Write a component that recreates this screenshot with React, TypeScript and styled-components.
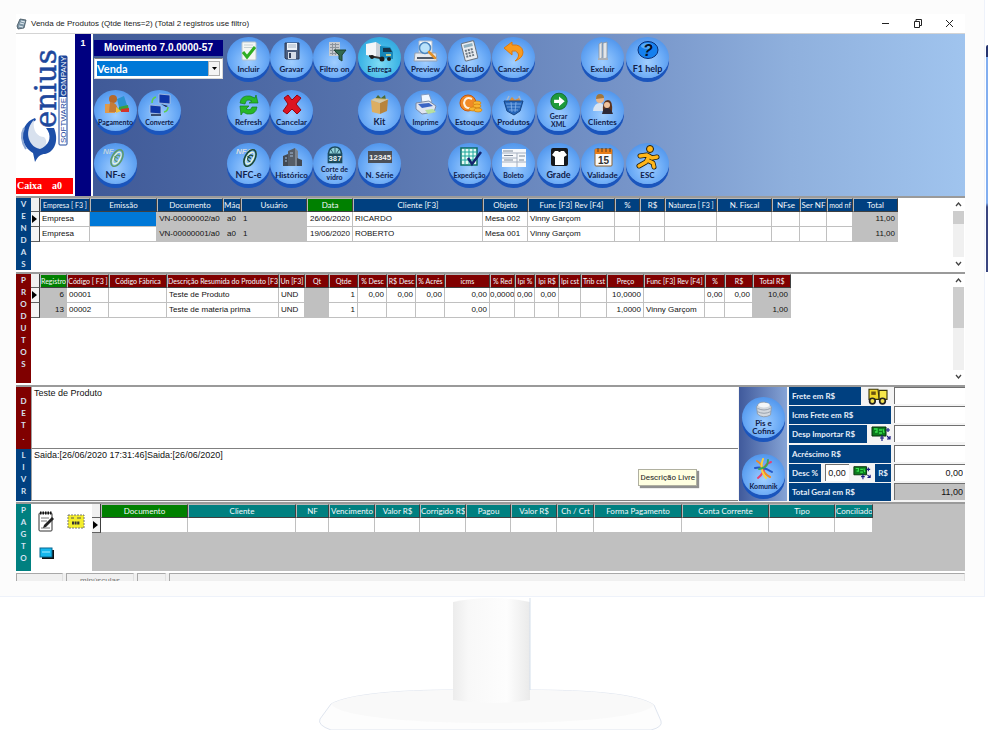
import React from "react";
import styled, { createGlobalStyle, css } from "styled-components";

const SANS = '"Liberation Sans", Arial, sans-serif';
const HAND = '"Comic Sans MS", Lato, sans-serif';
const NAVY = "#004080";
const MAROON = "#800000";
const TEAL = "#008080";
const GREEN = "#008000";
const SILVER = "#c0c0c0";

const GlobalStyle = createGlobalStyle`
  *, *::before, *::after { box-sizing: border-box; }
  body { margin: 0; background: #fff; font-family: ${SANS}; overflow: hidden; }
  button, input, select, textarea { font: inherit; margin: 0; padding: 0; border: 0; border-radius: 0; outline: 0; }
`;

/* ---------- page and monitor ---------- */

const Page = styled.div`
  display: flex;
  align-items: flex-start;
  gap: 1px;
  min-height: 100vh;
  overflow: hidden;
`;

const MonitorColumn = styled.div`
  flex: 1;
  min-width: 0;
`;

const Bezel = styled.div`
  padding: 14px 19px 15px 16px;
  background: #fcfcfc;
  border-right: 1px solid #eef2fa;
  border-bottom: 1px solid #eef2fa;
`;

const EdgeCard = styled.div`
  flex: none;
  width: 2px;
  height: 227px;
  margin-top: 45px;
  border-top-left-radius: 2px;
  background: linear-gradient(#26346f 0 12px, #82aef0 12px 158px, #3a4680 162px 100%);
`;

const StandSvg = styled.svg`
  display: block;
  margin: 0 auto;
`;

/* ---------- application window ---------- */

const AppWindow = styled.main`
  display: flex;
  flex-direction: column;
  background: #fff;
`;

const TitleBar = styled.header`
  display: flex;
  align-items: center;
  height: 20px;
  border-bottom: 1px solid #d4d4d4;
  color: #222;
`;

const TitleText = styled.h1`
  flex: 1;
  margin: 0 0 0 4px;
  font: 400 8px/12px ${SANS};
`;

const CaptionButton = styled.button`
  display: grid;
  place-items: center;
  width: 32px;
  height: 18px;
  background: none;
`;

const TopArea = styled.section`
  display: flex;
  height: 162px;
`;

const BrandColumn = styled.div`
  display: flex;
  flex-direction: column;
  width: 59px;
  padding-right: 2px;
`;

const CashTag = styled.div`
  display: flex;
  gap: 10px;
  height: 16px;
  margin-bottom: 2px;
  padding-left: 1px;
  background: #ff0000;
  color: #fff;
  font: 700 10px/16px "Liberation Serif", serif;
`;

const NumberStrip = styled.div`
  width: 16px;
  margin-right: 2px;
  padding-top: 3px;
  background: #000080;
  color: #fff;
  text-align: center;
  font: 700 9px/12px ${SANS};
`;

const Toolbar = styled.nav`
  flex: 1;
  display: grid;
  grid-template-columns: 44px 44px 45px 43px 43px 45px 46px 44px 44px 45px 44px 45px 43px;
  grid-template-rows: 53px 53px 53px;
  align-content: start;
  padding: 3px 0 0 1px;
  background: linear-gradient(90deg, #405a98 0%, #5572ac 30%, #7795c9 62%, #8fb0dd 80%, #a0c4ee 100%);
`;

const MovementBlock = styled.div`
  grid-column: 1 / span 3;
  display: flex;
  flex-direction: column;
  gap: 2px;
  width: 129px;
  padding-top: 3px;
`;

const MovementTitle = styled.div`
  height: 16px;
  background: #000080;
  color: #fff;
  text-align: center;
  white-space: nowrap;
  font: 700 10px/16px ${SANS};
`;

const ComboBox = styled.div`
  display: grid;
  grid-template-columns: 1fr 12px;
  height: 21px;
  padding: 2px;
  background: #fff;
  border: 1px solid #d8d8d8;
  border-top-color: #808080;
`;

const ComboSelect = styled.select`
  appearance: none;
  background: #0078d7;
  color: #fff;
  font: 700 11px/15px ${HAND};
`;

const ComboArrow = styled.span`
  display: grid;
  place-items: center;
  background: #f4f4f4;
  border: 1px solid #b0b0b0;
`;

const RoundButton = styled.button<{ $col?: number; $row?: number; $cyan?: boolean }>`
  ${({ $col, $row }) => $col && css`grid-column: ${$col}; grid-row: ${$row};`}
  display: flex;
  flex-direction: column;
  align-items: center;
  width: 43px;
  height: 41px;
  padding-top: 4px;
  border-radius: 50%;
  box-shadow: 0 4px 0 #1a55bd;
  background: ${({ $cyan }) =>
    $cyan
      ? "radial-gradient(circle at 50% 65%, #7fdcf4 0%, #3fb6e6 55%, #2a9ad8 100%)"
      : "radial-gradient(circle at 50% 62%, #a0ceff 0%, #6aaaf6 50%, #3c84e2 100%)"};
  color: #10204a;
`;

const IconSvg = styled.svg<{ $small?: boolean }>`
  flex: none;
  display: block;
  width: 26px;
  height: ${({ $small }) => ($small ? 18 : 22)}px;
  overflow: visible;
`;

const RoundLabel = styled.span<{ $size: number; $two?: boolean }>`
  white-space: pre;
  text-align: center;
  font: 700 ${({ $size }) => $size}px/${({ $two }) => ($two ? 8 : 12)}px ${HAND};
`;

/* ---------- data panels ---------- */

const Panel = styled.section<{ $height: number }>`
  display: flex;
  min-height: ${({ $height }) => $height}px;
  padding: 0 0 2px;
  border-top: 2px solid #9a9a9a;
  background: #fff;
`;

const SideLabel = styled.h2<{ $color: string; $pad?: number }>`
  display: flex;
  flex-direction: column;
  flex: none;
  width: 15px;
  margin: 0;
  padding-top: ${({ $pad }) => $pad ?? 0}px;
  background: ${({ $color }) => $color};
  color: #d5e2f2;
  text-align: center;
  font: 700 8px/12px ${HAND};
`;

const GridArea = styled.div<{ $fill?: string }>`
  flex: 1;
  min-width: 0;
  overflow: hidden;
  background: ${({ $fill }) => $fill ?? "#fff"};
`;

const DataTable = styled.table<{ $width: number }>`
  width: ${({ $width }) => $width}px;
  table-layout: fixed;
  border-collapse: separate;
  border-spacing: 0;
`;

const HeadCell = styled.th<{ $color: string; $size: number }>`
  height: 14px;
  padding: 0;
  overflow: hidden;
  border: 1px solid #404040;
  border-left-color: #b8b8b8;
  border-top-color: #b8b8b8;
  background: ${({ $color }) => $color};
  color: #f4f8fc;
  text-align: center;
  white-space: nowrap;
  font: 400 ${({ $size }) => $size}px/12px Lato, sans-serif;
`;

const Cell = styled.td<{ $fill: string; $align: string; $tight?: boolean }>`
  height: 15px;
  padding: 0 ${({ $tight }) => ($tight ? 0 : 2)}px;
  overflow: hidden;
  border-right: 1px solid ${SILVER};
  border-bottom: 1px solid ${SILVER};
  background: ${({ $fill }) => $fill};
  color: #111;
  text-align: ${({ $align }) => $align};
  white-space: nowrap;
  font: 400 8px/12px ${SANS};
`;

const MarkerCell = styled.td`
  height: 15px;
  padding: 0;
  border-right: 1px solid #404040;
  border-bottom: 1px solid #606060;
  background: #f4f4f4;
`;

const CornerCell = styled.th`
  padding: 0;
  border-right: 1px solid #404040;
  border-bottom: 1px solid #606060;
  background: #f0f0f0;
`;

const Marker = styled.svg`
  display: block;
  margin: 0 auto;
`;

const ScrollColumn = styled.div`
  display: flex;
  flex-direction: column;
  align-items: center;
  flex: none;
  width: 11px;
  margin-right: 1px;
  background: #f0f0f0;
`;

const ScrollThumb = styled.div<{ $size: number }>`
  width: 11px;
  height: ${({ $size }) => $size}px;
  margin-bottom: auto;
  background: #cdcdcd;
`;

const ScrollButton = styled.button`
  display: grid;
  place-items: center;
  width: 11px;
  height: 13px;
  background: #fff;
`;

/* ---------- details ---------- */

const DetailArea = styled.section`
  display: flex;
  height: 117px;
  padding-bottom: 1px;
  border-top: 2px solid #9a9a9a;
  background: #f4f4f4;
`;

const NotesColumn = styled.div`
  flex: 1;
  display: grid;
  grid-template-rows: 62px 1fr;
  position: relative;
`;

const NoteRow = styled.div`
  display: flex;
`;

const NoteText = styled.textarea`
  flex: 1;
  min-width: 0;
  padding: 1px 2px;
  resize: none;
  border-left: 1px solid #a0a0a0;
  border-bottom: 1px solid #808080;
  background: #fff;
  color: #111;
  font: 400 9px/11px ${SANS};
`;

const Tooltip = styled.div`
  position: absolute;
  right: 41px;
  bottom: 15px;
  padding: 0 1px;
  border: 1px solid #b0b0a0;
  background: #ffffe1;
  box-shadow: 2px 2px 1px #909090;
  color: #222;
  font: 400 8px/15px Roboto, sans-serif;
`;

const ExtraActions = styled.div`
  display: flex;
  flex-direction: column;
  gap: 16px;
  width: 48px;
  margin: 0 2px 0 1px;
  padding: 10px 0 0 3px;
  background: linear-gradient(90deg, #405a9c, #86a4d6);
`;

const Totals = styled.form`
  display: grid;
  grid-template-rows: repeat(6, 18px);
  align-content: space-between;
  width: 176px;
`;

const TotalsRow = styled.div`
  display: grid;
  grid-template-columns: 102px 1fr;
  gap: 3px;
`;

const TotalsLead = styled.div`
  display: flex;
  align-items: center;
  gap: 4px;
`;

const FieldLabel = styled.label<{ $fixed?: boolean }>`
  flex: ${({ $fixed }) => ($fixed ? "none" : "1")};
  align-self: stretch;
  padding: 0 3px;
  background: ${NAVY};
  color: #e6eef8;
  white-space: nowrap;
  font: 700 8px/18px ${HAND};
`;

const Field = styled.input<{ $gray?: boolean }>`
  min-width: 0;
  width: 100%;
  height: 17px;
  padding: 0 2px;
  border-top: 1px solid #707070;
  border-left: 1px solid #707070;
  background: ${({ $gray }) => ($gray ? SILVER : "#fff")};
  color: #111;
  text-align: right;
  font: 400 9px/14px ${SANS};
`;

const SmallField = styled(Field)`
  width: 26px;
  text-align: left;
`;

/* ---------- payment and status ---------- */

const PayTools = styled.div`
  display: grid;
  grid-template-columns: 30px 30px;
  grid-template-rows: 34px 30px;
  place-items: center;
  flex: none;
  width: 61px;
`;

const PayButton = styled.button`
  display: grid;
  place-items: center;
  background: none;
`;

const StatusBar = styled.footer`
  display: flex;
  gap: 3px;
  height: 8px;
  overflow: hidden;
  background: #f0f0f0;
`;

const StatusCell = styled.span<{ $width?: number }>`
  ${({ $width }) => ($width ? css`width: ${$width}px;` : css`flex: 1;`)}
  border-top: 1px solid #a8a8a8;
  border-left: 1px solid #a8a8a8;
  border-right: 1px solid #e0e0e0;
  color: #777;
  text-align: center;
  font: 400 8px/14px ${SANS};
`;

/* ---------- icon drawings ---------- */

const bars = (
  <g fill="#8d949c">
    <rect x="7" y="1" width="11" height="14" fill="#c6cbd0" />
    {[3, 6, 9, 12].map((y) => <rect key={y} x="8" y={y} width="9" height="1" />)}
    {[10, 13].map((x) => <rect key={x} x={x} y="2" width="1" height="12" />)}
  </g>
);

const nf = (title: string, gray: string, dark: string) => (
  <>
    <text x="0" y="7" fontSize="8" fontWeight="700" fontStyle="italic" fill={gray} fontFamily="Liberation Sans">{title}</text>
    <g fill="none" transform="rotate(28 14 11)">
      <ellipse cx="14" cy="11" rx="5" ry="9" stroke={dark} strokeWidth="1.6" />
      <ellipse cx="14" cy="11" rx="3" ry="6.5" stroke="#f4fbd0" strokeWidth="1.3" />
      <path d="M16 8q-4-1-4 3t4 3M11 11h4" stroke={dark} strokeWidth="1.2" />
    </g>
  </>
);

const ICONS: Record<string, React.ReactNode> = {
  incluir: (
    <>
      <rect x="6" y="1" width="14" height="18" rx="1" fill="#f3f6f4" stroke="#b8c4cc" />
      <path d="M8 4h9M8 6.500h9" stroke="#c5d0d4" />
      <path d="M7 11l4 5 8-10" fill="none" stroke="#2fae22" strokeWidth="3" />
    </>
  ),
  gravar: (
    <>
      <path d="M6 2h14v16H7l-1-1z" fill="#4b5f80" stroke="#2c3a55" />
      <rect x="8" y="2" width="10" height="7" fill="#eef3f8" />
      <path d="M9 4h8M9 6h8" stroke="#a9b6c5" />
      <rect x="9" y="11" width="8" height="7" fill="#d6dee8" />
      <rect x="10" y="12" width="2" height="5" fill="#33425f" />
    </>
  ),
  filtro: (
    <>
      {bars}
      <path d="M12 9h12l-4 5v6l-3-2v-4z" fill="#32694f" stroke="#1d4030" />
    </>
  ),
  entrega: (
    <>
      <path d="M-1 3l10-2v15l-10-2z" fill="#f4f6f8" />
      <path d="M9 1l5 3v12H9z" fill="#c8d0d8" />
      <path d="M13 5l10 1 3 5v7l-13-1z" fill="#1787b8" />
      <path d="M16 7h7l2 4h-9z" fill="#15354b" />
      <path d="M2 14l11 2v2L2 16z" fill="#333" />
      <g fill="#1c1c1c"><circle cx="5" cy="16" r="2" /><circle cx="15" cy="18" r="2.500" /><circle cx="22" cy="18" r="2" /></g>
      <path d="M19 14h5" stroke="#f2e089" strokeWidth="1.500" />
    </>
  ),
  preview: (
    <>
      <path d="M6 0h13v12H6z" fill="#fff" stroke="#b0bccb" />
      <path d="M2 12h21l1 8H1z" fill="#e6eaef" stroke="#93a0b2" />
      <path d="M4 16h17v2H4z" fill="#4f5a6a" />
      <circle cx="12" cy="7" r="5.500" fill="#b9e2fb" stroke="#4d87c0" strokeWidth="1.500" />
      <path d="M16 11l6 6" stroke="#e0912c" strokeWidth="2.500" strokeLinecap="round" />
    </>
  ),
  calculo: (
    <g transform="rotate(-14 12 10)">
      <rect x="6" y="1" width="13" height="18" rx="1" fill="#e9edf1" stroke="#6a7480" />
      <rect x="8" y="3" width="9" height="3" fill="#8fb0c0" />
      {[8, 11, 14].map((y) => [8, 11, 14].map((x) => <rect key={`${x}${y}`} x={x} y={y} width="2" height="2" fill="#6c7883" />))}
    </g>
  ),
  voltar: (
    <path d="M3 7l8-6v3q10-1 11 7 0 6-8 9 5-4 3-8-2-3-6-2v4z" fill="#f99a1c" stroke="#e07808" />
  ),
  excluir: (
    <>
      <path d="M9 3l3-2v16l-3 1zM13 2l4-1v16l-4 1z" fill="#e3e6ea" stroke="#8a929c" strokeWidth=".8" />
      <path d="M8 17h10v2H8z" fill="#aab0b8" />
    </>
  ),
  help: (
    <>
      <ellipse cx="13" cy="9" rx="10" ry="8.500" fill="#1580ee" stroke="#082f78" />
      <ellipse cx="12" cy="5" rx="6" ry="3" fill="#73baff" opacity=".7" />
      <text x="8" y="15" fontSize="16" fontWeight="700" fontStyle="italic" fill="#071226" fontFamily="Liberation Sans">?</text>
    </>
  ),
  pagamento: (
    <>
      <path d="M14 5l7-3 4 12-8 3z" fill="#2c93cf" />
      <path d="M16 13l9-2 1 6H15z" fill="#3aa23c" />
      <path d="M18 15l8-1v4h-8z" fill="#d4342a" />
      <path d="M2 10h10v9H2z" fill="#e09a4a" />
      <circle cx="10" cy="5" r="4" fill="#b5692c" />
      <path d="M7 8q8 0 8 10H6z" fill="#c57c38" />
      <path d="M13 13l5 4-5 2z" fill="#f0c03a" />
    </>
  ),
  converte: (
    <>
      <g stroke="#b4c4dc" strokeWidth=".8">
        <path d="M12 0l11 1v9l-11-1z" fill="#0f37a8" />
        <path d="M3 11l11 1v8l-11-1z" fill="#0f37a8" />
      </g>
      <path d="M14 10l7 2-2 1z" fill="#1b2440" />
      <path d="M5 9q0-5 4-6M21 13q0 4-4 5" fill="none" stroke="#5fcf4c" strokeWidth="1.500" />
      <path d="M4 21h10" stroke="#1b2440" strokeWidth="1.500" />
    </>
  ),
  refresh: (
    <g fill="#28b828" stroke="#128018" strokeWidth=".7">
      <path d="M4 9q1-8 10-7l5 2 1-3 2 8h-9l3-2q-6-3-7 3z" />
      <path d="M21 13q-1 8-10 7l-4-2-2 3-1-9h9l-3 3q5 2 6-2z" />
    </g>
  ),
  xis: <path d="M5 4l4-3 4 5 5-5 4 3-5 6 5 6-4 4-5-5-5 5-4-3 5-7z" fill="#dc1420" stroke="#96060f" />,
  kit: (
    <>
      <path d="M8 5l3-4 3 3 4-3 1 5z" fill="#4d6b34" />
      <path d="M4 6l9 3v11l-8-2z" fill="#dcae62" />
      <path d="M21 5l-8 4v11l7-3z" fill="#b8843c" />
      <path d="M4 6l4-2 14 1-9 4z" fill="#efcf8e" opacity=".8" />
    </>
  ),
  imprime: (
    <>
      <path d="M8 1l8-1 3 8-10 2z" fill="#eef6ff" stroke="#7f98c0" />
      <path d="M3 9l13-2 7 5-2 6-12 2-6-5z" fill="#dfe5f0" stroke="#7d8aa4" />
      <path d="M5 10l11-1 4 3-11 2z" fill="#3b64c4" />
      <path d="M12 16l8-1 3 3-8 2z" fill="#b8e0a0" />
    </>
  ),
  estoque: (
    <>
      <circle cx="11" cy="9" r="8" fill="#f18a26" stroke="#c4560c" />
      <path d="M15 5q-7-3-8 4 1 6 7 5" fill="none" stroke="#fff2df" strokeWidth="2" />
      <g fill="#f7b531" stroke="#cf7d10" strokeWidth=".7">
        <ellipse cx="20" cy="9" rx="4" ry="2" /><ellipse cx="20" cy="12" rx="4" ry="2" /><ellipse cx="16" cy="15" rx="4" ry="2" /><ellipse cx="21" cy="16" rx="4" ry="2" />
      </g>
    </>
  ),
  produtos: (
    <>
      <path d="M5 8l3-6M20 8l-2-6" stroke="#a6b6cc" strokeWidth="1.500" />
      <path d="M7 8l4-5 3 3 4-2 2 4z" fill="#d98f3e" />
      <path d="M3 7h19l-3 10-6 4-7-4z" fill="#2767ba" stroke="#164483" />
      <path d="M5 10h15M6 13h13M8 16h9M10 8l1 10M15 8l-1 10" stroke="#86b4ec" strokeWidth=".8" />
    </>
  ),
  xml: (
    <>
      <circle cx="13" cy="9" r="10" fill="#1e9a3c" stroke="#0d6423" />
      <path d="M7 7h6V3l7 6-7 6v-4H7z" fill="#fff" />
    </>
  ),
  clientes: (
    <>
      <circle cx="10" cy="5" r="4" fill="#e8b58a" /><path d="M6 5q0-5 4-5t4 4z" fill="#a0763c" />
      <path d="M3 17q1-8 7-8 4 0 5 8z" fill="#d9e4f2" />
      <path d="M13 18q-1-12 5-12 5 0 4 12z" fill="#5d331d" />
      <circle cx="17" cy="11" r="3" fill="#f0c29c" />
      <path d="M12 20q1-6 5-6t6 6z" fill="#2d2a38" />
    </>
  ),
  nfe: nf("NF", "#bcd2e2", "#5d9a6a"),
  nfce: nf("NFC", "#d8dde0", "#1d4a34"),
  historico: (
    <>
      <path d="M9 4l7-3v18H9z" fill="#565d66" />
      <path d="M16 1l3 3v15h-3z" fill="#7c848e" />
      <path d="M4 9l5-2v12H4zM18 11l5 2v6h-5z" fill="#424952" />
      <path d="M11 6h3M11 9h3M6 11h2M6 14h2" stroke="#a4bdd8" />
    </>
  ),
  vidro: (
    <>
      <path d="M4 20V8q1-9 9-9t9 9v12z" fill="#1c4a5c" />
      <path d="M6 8q1-7 7-7t7 7z" fill="#8fd0d8" />
      <path d="M13 1v7M8 3l3 5M18 3l-3 5" stroke="#1c4a5c" />
      <text x="5" y="17" fontSize="9" fontWeight="700" fill="#e8f4f8" fontFamily="Liberation Mono">387</text>
    </>
  ),
  serie: (
    <>
      <rect x="1" y="4" width="24" height="12" fill="#4b5058" />
      <text x="2" y="13" fontSize="8" fontWeight="700" fill="#f2f2f2" fontFamily="Liberation Sans">12345</text>
    </>
  ),
  expedicao: (
    <>
      <rect x="4" y="1" width="16" height="17" fill="#e4fbf4" stroke="#0c6c64" strokeWidth="1.500" />
      <path d="M4 5h16M4 9h16M4 13h16M8 1v17M12 1v17M16 1v17" stroke="#1aa69a" />
      <path d="M11 11l4 6 9-12" fill="none" stroke="#14246e" strokeWidth="2.500" />
    </>
  ),
  boleto: (
    <>
      <rect x="1" y="2" width="24" height="18" fill="#f6f8fb" />
      <path d="M1 6h24M1 11h15M1 15h24M16 6v14" stroke="#a4afc0" />
      <path d="M2 4h10M3 8.500h9M18 9h6M3 13h9M18 13h5" stroke="#5c6a80" strokeWidth=".8" />
    </>
  ),
  grade: (
    <>
      <rect x="5" y="1" width="17" height="18" rx="2" fill="#16181c" />
      <path d="M9 4h3q1.500 2 3 0h3l3 4-3 2v8H9v-8L6 8z" fill="#fff" />
    </>
  ),
  validade: (
    <>
      <rect x="5" y="2" width="17" height="17" rx="1" fill="#fafafa" stroke="#8c6030" />
      <rect x="5" y="2" width="17" height="5" fill="#e87d18" />
      <path d="M8 1v4M12 1v4M16 1v4M20 1v4" stroke="#5a3a18" />
      <text x="8" y="17" fontSize="10" fontWeight="700" fill="#333" fontFamily="Liberation Sans">15</text>
    </>
  ),
  esc: (
    <g stroke="#1c1a10" strokeLinejoin="round">
      <g fill="none" strokeLinecap="round">
        <path d="M5 9l7-1 5 3 5-1M14 9l-3 6-7 4M12 13l6 3 1 4" strokeWidth="5" />
        <path d="M5 9l7-1 5 3 5-1M14 9l-3 6-7 4M12 13l6 3 1 4" stroke="#ffb61a" strokeWidth="3.400" />
      </g>
      <circle cx="15" cy="2" r="3.500" fill="#ffb61a" />
    </g>
  ),
  pis: (
    <>
      <path d="M4 7q4-9 14-4l4 4-1 10q-9 5-16-1z" fill="#d3d8de" stroke="#8c96a2" />
      <path d="M5 9q8 4 16 0M5 13q8 4 16 0" fill="none" stroke="#8c96a2" />
      <ellipse cx="13" cy="5" rx="7" ry="3" fill="#f4f6f8" />
    </>
  ),
  komunik: (
    <g fill="none" strokeWidth="2" strokeLinecap="round">
      <path d="M6 3q5 3 6 8t7 8" stroke="#f08a24" /><path d="M20 4q-6 2-7 7t-6 9" stroke="#e83f72" />
      <path d="M4 10q8-2 17 4" stroke="#2358c8" /><path d="M12 1q-4 10 3 19" stroke="#ffd13a" />
      <path d="M17 2q0 8-9 9" stroke="#3aa852" />
    </g>
  ),
};

interface Action { label: string; icon: string; col: number; row: number; size?: number; cyan?: boolean }

const ACTIONS: Action[] = [
  { label: "Incluir", icon: "incluir", col: 4, row: 1 },
  { label: "Gravar", icon: "gravar", col: 5, row: 1 },
  { label: "Filtro on", icon: "filtro", col: 6, row: 1 },
  { label: "Entrega", icon: "entrega", col: 7, row: 1, size: 7, cyan: true },
  { label: "Preview", icon: "preview", col: 8, row: 1 },
  { label: "Cálculo", icon: "calculo", col: 9, row: 1, size: 9 },
  { label: "Cancelar", icon: "voltar", col: 10, row: 1 },
  { label: "Excluir", icon: "excluir", col: 12, row: 1 },
  { label: "F1 help", icon: "help", col: 13, row: 1, size: 9 },
  { label: "Pagamento", icon: "pagamento", col: 1, row: 2, size: 7 },
  { label: "Converte", icon: "converte", col: 2, row: 2, size: 7 },
  { label: "Refresh", icon: "refresh", col: 4, row: 2 },
  { label: "Cancelar", icon: "xis", col: 5, row: 2 },
  { label: "Kit", icon: "kit", col: 7, row: 2, size: 9 },
  { label: "Imprime", icon: "imprime", col: 8, row: 2, size: 7 },
  { label: "Estoque", icon: "estoque", col: 9, row: 2 },
  { label: "Produtos", icon: "produtos", col: 10, row: 2 },
  { label: "Gerar\nXML", icon: "xml", col: 11, row: 2, size: 7 },
  { label: "Clientes", icon: "clientes", col: 12, row: 2 },
  { label: "NF-e", icon: "nfe", col: 1, row: 3, size: 9 },
  { label: "NFC-e", icon: "nfce", col: 4, row: 3, size: 9 },
  { label: "Histórico", icon: "historico", col: 5, row: 3 },
  { label: "Corte de\nvidro", icon: "vidro", col: 6, row: 3, size: 7 },
  { label: "N. Série", icon: "serie", col: 7, row: 3 },
  { label: "Expedição", icon: "expedicao", col: 9, row: 3, size: 7 },
  { label: "Boleto", icon: "boleto", col: 10, row: 3, size: 7 },
  { label: "Grade", icon: "grade", col: 11, row: 3, size: 9 },
  { label: "Validade", icon: "validade", col: 12, row: 3 },
  { label: "ESC", icon: "esc", col: 13, row: 3 },
];

function ActionButton({ label, icon, col, row, size, cyan }: Omit<Action, "col" | "row"> & { col?: number; row?: number }) {
  const two = label.includes("\n");
  return (
    <RoundButton type="button" $col={col} $row={row} $cyan={cyan}>
      <IconSvg viewBox="0 0 26 22" $small={two} aria-hidden="true">{ICONS[icon]}</IconSvg>
      <RoundLabel $size={size ?? 8} $two={two}>{label}</RoundLabel>
    </RoundButton>
  );
}

/* ---------- tables ---------- */

interface Column { title: string; width: number; color?: string; fill?: string; align?: string; tight?: boolean; size?: number }

const SALES: Column[] = [
  { title: "Empresa [ F3 ]", width: 50, size: 7 },
  { title: "Emissão", width: 67 },
  { title: "Documento", width: 66, fill: SILVER, align: "center" },
  { title: "Máq", width: 18, fill: SILVER, align: "center" },
  { title: "Usuário", width: 66, fill: SILVER },
  { title: "Data", width: 46, color: GREEN, align: "right" },
  { title: "Cliente [F3]", width: 130 },
  { title: "Objeto", width: 45 },
  { title: "Func [F3] Rev [F4]", width: 87 },
  { title: "%", width: 25 },
  { title: "R$", width: 25 },
  { title: "Natureza [ F3 ]", width: 52, size: 7 },
  { title: "N. Fiscal", width: 55 },
  { title: "NFse", width: 28 },
  { title: "Ser NF", width: 27 },
  { title: "mod nf", width: 26, size: 7 },
  { title: "Total", width: 45, fill: SILVER, align: "right" },
];

const SALES_ROWS = [
  ["Empresa", "", "VN-00000002/a0", "a0", "1", "26/06/2020", "RICARDO", "Mesa 002", "Vinny Garçom", "", "", "", "", "", "", "", "11,00"],
  ["Empresa", "", "VN-00000001/a0", "a0", "1", "19/06/2020", "ROBERTO", "Mesa 001", "Vinny Garçom", "", "", "", "", "", "", "", "11,00"],
];

const PRODUCTS: Column[] = [
  { title: "Registro", width: 27, color: GREEN, fill: SILVER, align: "right" },
  { title: "Código [ F3 ]", width: 42 },
  { title: "Código Fábrica", width: 58 },
  { title: "Descrição Resumida do Produto [F3]", width: 112 },
  { title: "Un [F3]", width: 26 },
  { title: "Qt", width: 24, fill: SILVER },
  { title: "Qtde", width: 29, align: "right" },
  { title: "% Desc", width: 29, align: "right" },
  { title: "R$ Desc", width: 29, align: "right" },
  { title: "% Acrés", width: 29, align: "right" },
  { title: "icms", width: 45, align: "right" },
  { title: "% Red", width: 25, align: "right", tight: true },
  { title: "Ipi %", width: 20, align: "right" },
  { title: "Ipi R$", width: 24, align: "right" },
  { title: "Ipi cst", width: 22 },
  { title: "Trib cst", width: 26 },
  { title: "Preço", width: 37, align: "right" },
  { title: "Func [F3] Rev [F4]", width: 61 },
  { title: "%", width: 20, align: "right" },
  { title: "R$", width: 28, align: "right" },
  { title: "Total R$", width: 38, fill: SILVER, align: "right" },
];

const PRODUCT_ROWS = [
  ["6", "00001", "", "Teste de Produto", "UND", "", "1", "0,00", "0,00", "0,00", "0,00", "0,0000", "0,00", "0,00", "", "", "10,0000", "", "0,00", "0,00", "10,00"],
  ["13", "00002", "", "Teste de materia prima", "UND", "", "1", "", "", "", "0,00", "", "", "", "", "", "1,0000", "Vinny Garçom", "", "", "1,00"],
];

const PAYMENTS: Column[] = [
  { title: "Documento", width: 87, color: GREEN },
  { title: "Cliente", width: 108 },
  { title: "NF", width: 33 },
  { title: "Vencimento", width: 46 },
  { title: "Valor R$", width: 45 },
  { title: "Corrigido R$", width: 46 },
  { title: "Pagou", width: 45 },
  { title: "Valor R$", width: 46 },
  { title: "Ch / Crt", width: 37 },
  { title: "Forma Pagamento", width: 88 },
  { title: "Conta Corrente", width: 87 },
  { title: "Tipo", width: 66 },
  { title: "Conciliado", width: 38 },
];

function DataGrid({ columns, rows, color, size, selected }: {
  columns: Column[]; rows: string[][]; color: string; size: number; selected?: number;
}) {
  const total = columns.reduce((sum, c) => sum + c.width, 9);
  return (
    <DataTable $width={total}>
      <colgroup>
        <col width={9} />
        {columns.map((c, i) => <col key={i} width={c.width} />)}
      </colgroup>
      <thead>
        <tr>
          <CornerCell />
          {columns.map((c, i) => <HeadCell key={i} $color={c.color ?? color} $size={c.size ?? size}>{c.title}</HeadCell>)}
        </tr>
      </thead>
      <tbody>
        {rows.map((row, r) => (
          <tr key={r}>
            <MarkerCell>
              {r === 0 && <Marker width="6" height="8" viewBox="0 0 6 8"><path d="M0 0l5 4-5 4z" fill="#000" /></Marker>}
            </MarkerCell>
            {row.map((value, i) => (
              <Cell
                key={i}
                $align={columns[i].align ?? "left"}
                $tight={columns[i].tight}
                $fill={r === 0 && i === selected ? "#0078d7" : columns[i].fill ?? "#fff"}
              >
                {value}
              </Cell>
            ))}
          </tr>
        ))}
      </tbody>
    </DataTable>
  );
}

function Scroll({ thumb }: { thumb: number }) {
  return (
    <ScrollColumn>
      <ScrollButton type="button" aria-label="Subir">
        <svg width="7" height="5" viewBox="0 0 7 5"><path d="M1 4l2.500-3L6 4" fill="none" stroke="#444" strokeWidth="1.300" /></svg>
      </ScrollButton>
      <ScrollThumb $size={thumb} />
      <ScrollButton type="button" aria-label="Descer">
        <svg width="7" height="5" viewBox="0 0 7 5"><path d="M1 1l2.500 3L6 1" fill="none" stroke="#444" strokeWidth="1.300" /></svg>
      </ScrollButton>
    </ScrollColumn>
  );
}

function Side({ text, color, pad }: { text: string; color: string; pad?: number }) {
  return (
    <SideLabel $color={color} $pad={pad}>
      {text.split("").map((letter, i) => <span key={i}>{letter}</span>)}
    </SideLabel>
  );
}

function Logo() {
  return (
    <svg width="57" height="144" viewBox="0 0 57 144" role="img" aria-label="Genius Software Company">
      <text transform="translate(40 94) rotate(-90)" fontFamily="DejaVu Serif" fontSize="29" fill="#1d479c" stroke="#1d479c" strokeWidth=".5">enius</text>
      <rect x="43" y="22" width="8" height="89" rx="1" fill="#fff" stroke="#1d479c" />
      <rect x="43" y="22" width="8" height="41" fill="#1d479c" />
      <text transform="translate(50 109) rotate(-90)" fontFamily="Liberation Sans" fontSize="8" fill="#1d479c">SOFTWARE</text>
      <text transform="translate(50 62) rotate(-90)" fontFamily="Liberation Sans" fontSize="8" fill="#fff">COMPANY</text>
      <path d="M19 84C10 87 5 96 7 106C9 114 14 117 17 119L19 128C22 122 25 120 29 120C39 118 43 106 38 94L30 94C36 101 34 110 27 113C20 114 11 106 13 97C14 91 17 88 20 86Z" fill="#1d4fa8" />
      <path d="M18 86C9 94 10 112 24 115C31 113 32 107 28 103C22 103 16 97 18 86Z" fill="#d8e1ee" />
      <path d="M8 94Q3 104 10 115" fill="none" stroke="#8fa9d4" strokeWidth="2" />
    </svg>
  );
}

const MoneyIcon = () => (
  <svg width="20" height="16" viewBox="0 0 20 16" aria-hidden="true">
    <path d="M1 1h14v9H1z" fill="#0b7a1c" stroke="#032d08" />
    <path d="M3 3h3v3H4M8 4h3M8 7h3M12 3l1 4" fill="none" stroke="#39e04c" strokeWidth="1.300" />
    <path d="M11 9v6M9 12h4M15 4h4M17 2v4M16 10l3 3m0-3v3h-3" fill="none" stroke="#191980" strokeWidth="1.200" />
  </svg>
);

function Stand() {
  return (
    <StandSvg width="348" height="133" viewBox="0 0 348 133" aria-hidden="true">
      <defs>
        <linearGradient id="neck">
          <stop offset="0" stopColor="#ececec" /><stop offset=".2" stopColor="#f8f8f8" />
          <stop offset=".7" stopColor="#fdfdfd" /><stop offset="1" stopColor="#eaeaea" />
        </linearGradient>
      </defs>
      <path d="M12 107C30 97 80 93 134 93H212C270 93 320 97 335 108L342 124Q344 130 332 133H12Q-2 128 1 122Z" fill="#fdfdfd" stroke="#dfe5ef" />
      <path d="M12 107C30 97 80 93 134 93H212C270 93 320 97 335 108C325 120 260 126 173 126S20 119 12 107Z" fill="#f9f9f9" />
      <path d="M134 5V103Q173 109 211 103V5Q173-3 134 5Z" fill="url(#neck)" />
      <path d="M211 1V93" stroke="#d4dfec" />
    </StandSvg>
  );
}

export default function App() {
  return (
    <Page>
      <GlobalStyle />
      <MonitorColumn>
        <Bezel>
          <AppWindow>
            <TitleBar>
              <svg width="11" height="12" viewBox="0 0 11 12" aria-hidden="true">
                <path d="M4 1l6 1-2 8-6 1-1-3z" fill="#7d95a5" stroke="#3d4f5b" strokeWidth=".8" />
                <path d="M5 3l4 1M4 5l4 1M3 8l4 1" stroke="#e4eef4" />
              </svg>
              <TitleText>Venda de Produtos (Qtde Itens=2) (Total 2 registros use filtro)</TitleText>
              <CaptionButton type="button" aria-label="Minimizar">
                <svg width="9" height="9" viewBox="0 0 9 9"><path d="M1 4.500h7" stroke="#222" /></svg>
              </CaptionButton>
              <CaptionButton type="button" aria-label="Restaurar">
                <svg width="9" height="9" viewBox="0 0 9 9"><path d="M1.500 2.500h5v6h-5zM3 2V.500h5.500v6H7" fill="none" stroke="#222" /></svg>
              </CaptionButton>
              <CaptionButton type="button" aria-label="Fechar">
                <svg width="9" height="9" viewBox="0 0 9 9"><path d="M1 1l7 7M8 1L1 8" stroke="#222" /></svg>
              </CaptionButton>
            </TitleBar>

            <TopArea>
              <BrandColumn>
                <Logo />
                <CashTag><span>Caixa</span><span>a0</span></CashTag>
              </BrandColumn>
              <NumberStrip>1</NumberStrip>
              <Toolbar>
                <MovementBlock>
                  <MovementTitle>Movimento 7.0.0000-57</MovementTitle>
                  <ComboBox>
                    <ComboSelect aria-label="Movimento" defaultValue="Venda"><option>Venda</option></ComboSelect>
                    <ComboArrow><svg width="5" height="3" viewBox="0 0 5 3"><path d="M0 0h5L2.500 3z" /></svg></ComboArrow>
                  </ComboBox>
                </MovementBlock>
                {ACTIONS.map((a) => <ActionButton key={a.icon} {...a} />)}
              </Toolbar>
            </TopArea>

            <Panel $height={76}>
              <Side text="VENDAS" color={NAVY} />
              <GridArea><DataGrid columns={SALES} rows={SALES_ROWS} color={NAVY} size={8} selected={1} /></GridArea>
              <Scroll thumb={13} />
            </Panel>

            <Panel $height={113}>
              <Side text="PRODUTOS" color={MAROON} />
              <GridArea><DataGrid columns={PRODUCTS} rows={PRODUCT_ROWS} color={MAROON} size={7} /></GridArea>
              <Scroll thumb={41} />
            </Panel>

            <DetailArea>
              <NotesColumn>
                <NoteRow>
                  <Side text="DET." color={MAROON} pad={8} />
                  <NoteText aria-label="Detalhe" defaultValue="Teste de Produto" />
                </NoteRow>
                <NoteRow>
                  <Side text="LIVR" color={NAVY} />
                  <NoteText aria-label="Descrição Livre" defaultValue="Saida:[26/06/2020 17:31:46]Saida:[26/06/2020]" />
                </NoteRow>
                <Tooltip role="tooltip">Descrição Livre</Tooltip>
              </NotesColumn>
              <ExtraActions>
                <ActionButton label={"Pis e\nCofins"} icon="pis" />
                <ActionButton label="Komunik" icon="komunik" size={7} />
              </ExtraActions>
              <Totals>
                <TotalsRow>
                  <TotalsLead>
                    <FieldLabel htmlFor="frete">Frete em R$</FieldLabel>
                    <svg width="26" height="18" viewBox="0 0 22 16" aria-hidden="true">
                      <path d="M3 2h8l1 9H3z" fill="#f0d628" stroke="#3a3508" /><path d="M12 3h7v8h-7z" fill="#f7e74a" stroke="#3a3508" />
                      <path d="M5 4h4v3H5z" fill="#6a5210" />
                      <g fill="#f0e050" stroke="#222" strokeWidth="1.500"><circle cx="6" cy="12.500" r="2.500" /><circle cx="15" cy="12.500" r="2.500" /></g>
                    </svg>
                  </TotalsLead>
                  <Field id="frete" />
                </TotalsRow>
                <TotalsRow>
                  <TotalsLead><FieldLabel htmlFor="icms">Icms Frete em R$</FieldLabel></TotalsLead>
                  <Field id="icms" />
                </TotalsRow>
                <TotalsRow>
                  <TotalsLead><FieldLabel htmlFor="desp">Desp Importar R$</FieldLabel><MoneyIcon /></TotalsLead>
                  <Field id="desp" />
                </TotalsRow>
                <TotalsRow>
                  <TotalsLead><FieldLabel htmlFor="acrescimo">Acréscimo R$</FieldLabel></TotalsLead>
                  <Field id="acrescimo" />
                </TotalsRow>
                <TotalsRow>
                  <TotalsLead>
                    <FieldLabel htmlFor="descp">Desc %</FieldLabel>
                    <SmallField id="descp" defaultValue="0,00" />
                    <MoneyIcon />
                    <FieldLabel $fixed htmlFor="descr">R$</FieldLabel>
                  </TotalsLead>
                  <Field id="descr" defaultValue="0,00" />
                </TotalsRow>
                <TotalsRow>
                  <TotalsLead><FieldLabel htmlFor="total">Total Geral em R$</FieldLabel></TotalsLead>
                  <Field id="total" $gray defaultValue="11,00" />
                </TotalsRow>
              </Totals>
            </DetailArea>

            <Panel $height={71}>
              <Side text="PAGTO" color={TEAL} />
              <PayTools>
                <PayButton type="button" aria-label="Anotar">
                  <svg width="16" height="21" viewBox="0 0 16 21">
                    <rect x="1" y="2" width="13" height="18" rx="1" fill="#fff" stroke="#333" />
                    <path d="M2 2h12" stroke="#111" strokeWidth="3" strokeDasharray="1.500 1" />
                    <path d="M3 7h8M3 10h6M3 17h9" stroke="#777" />
                    <path d="M14 6L6 14l-1 3 3-1 8-8z" fill="#222" />
                  </svg>
                </PayButton>
                <PayButton type="button" aria-label="Cheque">
                  <svg width="18" height="15" viewBox="0 0 18 15">
                    <rect x="1" y="1" width="16" height="13" fill="#f4ee2c" stroke="#777" strokeDasharray="2 1" />
                    <path d="M4 4h3M10 4h4" stroke="#555" /><path d="M5 9h8" stroke="#333" strokeWidth="3" strokeDasharray="2 .600" />
                  </svg>
                </PayButton>
                <PayButton type="button" aria-label="Cartão">
                  <svg width="15" height="12" viewBox="0 0 15 12">
                    <path d="M3 3h12v9H3z" fill="#111" /><rect x="1" y="1" width="12" height="9" fill="#16b8ee" stroke="#06678f" />
                    <path d="M3 5h8" stroke="#a6ecff" />
                  </svg>
                </PayButton>
              </PayTools>
              <GridArea $fill={SILVER}>
                <DataGrid columns={PAYMENTS} rows={[PAYMENTS.map(() => "")]} color={TEAL} size={8} />
              </GridArea>
            </Panel>

            <StatusBar>
              <StatusCell $width={47} />
              <StatusCell $width={68}>minúsculas</StatusCell>
              <StatusCell $width={29} />
              <StatusCell />
            </StatusBar>
          </AppWindow>
        </Bezel>
        <Stand />
      </MonitorColumn>
      <EdgeCard />
    </Page>
  );
}
